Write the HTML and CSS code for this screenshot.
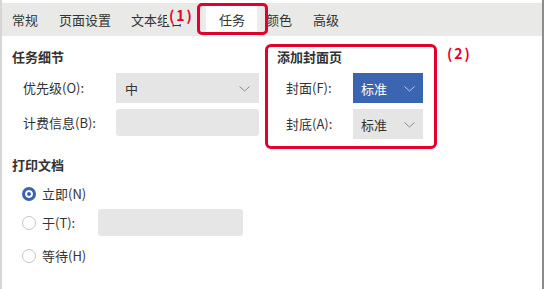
FILE: index.html
```html
<!DOCTYPE html>
<html lang="zh-CN">
<head>
  <meta charset="UTF-8" />
  <meta name="viewport" content="width=device-width, initial-scale=1.0"/>
  <title>打印设置 - 任务</title>
  <link rel="stylesheet" href="styles.css">
</head>
<body>
  <div class="window">
    <div class="tabs">
      <div class="tab tab-first">常规</div>
      <div class="tab">页面设置</div>
      <div class="tab">文本组合</div>
      <div class="tab tab-active">任务</div>
      <div class="tab tab-color">颜色</div>
      <div class="tab">高级</div>
    </div>

    <!-- callouts -->
    <div class="mark mark-tab"></div>
    <div class="callout callout-1">(1)</div>
    <div class="callout callout-2">(2)</div>

    <div class="content">
      <div class="row">
        <div class="group">
          <div class="title">任务细节</div>
          <div class="field">
            <label class="label">优先级(O):</label>
            <div class="select select-wide">
              <span>中</span>
              <svg class="chev" width="11" height="6" viewBox="0 0 11 6"><path d="M0.5 0.5 L5.5 5 L10.5 0.5" fill="none" stroke="#8a8a8a" stroke-width="1"/></svg>
            </div>
          </div>
          <div class="field">
            <label class="label">计费信息(B):</label>
            <div class="input input-wide"></div>
          </div>
        </div>

        <div class="group cover">
          <div class="title">添加封面页</div>
          <div class="field">
            <label class="label label-short">封面(F):</label>
            <div class="select select-small select-blue">
              <span>标准</span>
              <svg class="chev" width="11" height="6" viewBox="0 0 11 6"><path d="M0.5 0.5 L5.5 5 L10.5 0.5" fill="none" stroke="#b9c8e6" stroke-width="1"/></svg>
            </div>
          </div>
          <div class="field">
            <label class="label label-short">封底(A):</label>
            <div class="select select-small">
              <span>标准</span>
              <svg class="chev" width="11" height="6" viewBox="0 0 11 6"><path d="M0.5 0.5 L5.5 5 L10.5 0.5" fill="none" stroke="#8a8a8a" stroke-width="1"/></svg>
            </div>
          </div>
        </div>
      </div>

      <div class="print">
        <div class="title">打印文档</div>
        <div class="radio-row first">
          <span class="radio checked"></span>
          <span>立即(N)</span>
        </div>
        <div class="radio-row second">
          <span class="radio"></span>
          <span class="radio-label">于(T):</span>
          <div class="input input-time"></div>
        </div>
        <div class="radio-row last">
          <span class="radio"></span>
          <span>等待(H)</span>
        </div>
      </div>
    </div>
  </div>
</body>
</html>
```

FILE: styles.css
```css
body {
  margin: 0;
  font-family: "Noto Sans CJK SC", "Noto Sans", sans-serif;
  font-size: 13px;
  color: #333;
  background: #fff;
}

.window {
  position: relative;
  width: 544px;
  height: 289px;
  padding-top: 3px;
  box-sizing: border-box;
  border-left: 2px solid #d6d6d6;
  border-right: 2px solid #8c8c8c;
  overflow: hidden;
}

.tabs {
  display: flex;
  height: 33px;
  background: #e9e9e7;
  align-items: stretch;
}

.tab {
  display: flex;
  align-items: center;
  padding: 0 10px;
  line-height: 18px;
  white-space: nowrap;
}

.tab-first {
  margin-right: 1px;
}

.tab-active {
  margin-left: 10px;
  padding: 0 16px;
  background: #fff;
  box-shadow: inset 3px 0 0 #ececec, inset -4px 0 0 #ececec;
}

.tab-color {
  padding: 0 11px 0 5px;
}

.mark {
  position: absolute;
  border: 3px solid #e2002d;
  border-radius: 5px;
}

.mark-tab {
  left: 195px;
  top: 3px;
  width: 65px;
  height: 26px;
}

.callout {
  position: absolute;
  color: #e2002d;
  font-weight: bold;
  font-size: 14px;
  line-height: 18px;
  letter-spacing: 2px;
}

.callout-1 {
  left: 165px;
  top: 6px;
  padding: 0 1px 0 2px;
  background: #e9e9e7;
}

.callout-2 {
  left: 445px;
  top: 44px;
}

.content {
  padding: 12px 0 0 10px;
}

.row {
  display: flex;
  align-items: flex-start;
  gap: 6px;
}

.group {
  width: 247px;
}

.title {
  font-weight: bold;
  line-height: 18px;
  margin-bottom: 7px;
}

.field {
  display: flex;
  align-items: center;
  padding-left: 11px;
  margin-bottom: 6px;
}

.field:last-child {
  margin-bottom: 0;
}

.label {
  width: 93px;
  line-height: 18px;
}

.select {
  display: flex;
  align-items: center;
  justify-content: space-between;
  height: 30px;
  padding: 0 9px;
  box-sizing: border-box;
  background: #e5e5e5;
}

.select-wide {
  width: 143px;
}

.chev {
  margin-top: 1px;
}

.input {
  height: 27px;
  background: #e6e6e6;
  border-radius: 3px;
}

.input-wide {
  width: 143px;
}

.cover {
  width: 146px;
  margin-top: -4px;
  padding: 1px 11px 7px 9px;
  border: 3px solid #e2002d;
  border-radius: 6px;
}

.cover .field {
  padding-left: 0;
}

.label-short {
  width: 67px;
  padding-left: 9px;
}

.select-small {
  width: 70px;
  padding: 0 8px;
}

.select-blue {
  background: #3a65b1;
  color: #fff;
}

.print {
  margin-top: 7px;
}

.radio-row {
  display: flex;
  align-items: center;
  padding-left: 10px;
  height: 27px;
}

.radio-row.first {
  margin-top: -1px;
}

.radio-row.second {
  margin-top: 2px;
}

.radio-row.last {
  margin-top: 6px;
}

.radio {
  width: 14px;
  height: 14px;
  box-sizing: border-box;
  border: 1px solid #c6c6c6;
  border-radius: 50%;
  margin-right: 6px;
  background: #fff;
}

.radio.checked {
  border: 3px solid #3a65b1;
  background: #3a65b1;
  box-shadow: inset 0 0 0 2px #fff;
}

.radio-label {
  width: 56px;
}

.input-time {
  width: 145px;
}
```
